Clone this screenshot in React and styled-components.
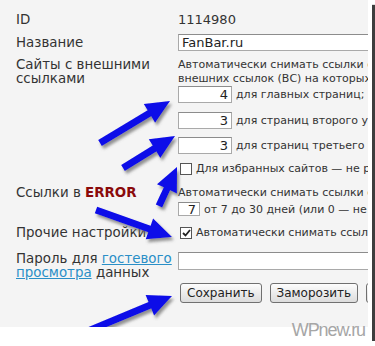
import React from 'react';
import styled, { createGlobalStyle } from 'styled-components';

const Global = createGlobalStyle`
  body {
    margin: 0;
    background: #fff;
    font-family: 'DejaVu Sans', Verdana, sans-serif;
  }
`;

const Frame = styled.div`
  position: relative;
  width: 372px;
  height: 341px;
  background: #fff;
  box-shadow: 3px 5px 1px rgba(40, 40, 40, 0.9);
`;

const Panel = styled.div`
  position: relative;
  width: 368px;
  height: 327px;
  background: #f4f4f4;
  overflow: hidden;
  color: #333;
`;

const Form = styled.div`
  display: flex;
  flex-direction: column;
  padding: 10px 0 0 16px;
`;

const Row = styled.div`
  display: grid;
  grid-template-columns: 162px 1fr;
  margin-top: ${p => p.$gap || 0}px;
  align-items: ${p => p.$align || 'start'};
`;

const Label = styled.div`
  font-size: 13.4px;
  line-height: ${p => p.$lh || 15}px;
`;

const Error = styled.b`
  color: #8a0a0a;
  font-weight: bold;
`;

const Link = styled.a`
  color: #2a8fc7;
  text-decoration: underline;
`;

const Value = styled.div`
  font-size: 13px;
  line-height: 16px;
  white-space: nowrap;
`;

const Content = styled.div`
  display: flex;
  flex-direction: column;
  white-space: nowrap;
`;

const Note = styled.div`
  font-size: 11px;
  line-height: 14px;
  white-space: nowrap;
`;

const Line = styled.div`
  display: flex;
  align-items: center;
  gap: 4px;
  font-size: 11px;
  white-space: nowrap;
  margin-top: ${p => p.$mt || 0}px;
`;

const Field = styled.input`
  box-sizing: border-box;
  width: ${p => p.$w}px;
  height: ${p => p.$h || 17}px;
  border: 1px solid #a9a9a9;
  border-top-color: #8c8c8c;
  background: #fff;
  font-family: 'DejaVu Sans', Verdana, sans-serif;
  font-size: 13px;
  color: #222;
  padding: 0 3px;
  text-align: ${p => p.$right ? 'right' : 'left'};
  margin: 0;
  outline: none;
  flex-shrink: 0;
`;

const Box = styled.span`
  box-sizing: border-box;
  width: 12px;
  height: 12px;
  margin-left: 2px;
  border: 1px solid #555;
  background: #fff;
  display: inline-flex;
  align-items: center;
  justify-content: center;
  flex-shrink: 0;
`;

const Buttons = styled.div`
  display: flex;
  gap: 8px;
  padding-left: 2px;
`;

const Button = styled.button`
  height: 20px;
  padding: 0 6px;
  border: 1px solid #707070;
  border-radius: 3px;
  background: linear-gradient(#fdfdfd, #ececec 50%, #dcdcdc);
  font-family: 'DejaVu Sans', Verdana, sans-serif;
  font-size: 12px;
  color: #222;
  white-space: nowrap;
  flex-shrink: 0;
`;

const Watermark = styled.div`
  position: absolute;
  right: 7px;
  top: 320px;
  font-family: 'Liberation Sans', Arial, sans-serif;
  font-size: 18px;
  line-height: 20px;
  letter-spacing: -1.1px;
  color: #a6a6a6;
`;

const Overlay = styled.svg`
  position: absolute;
  left: 0;
  top: 0;
  pointer-events: none;
`;

const arrows = [
  [100, 143, 170, 101],
  [123, 168, 175, 136],
  [159, 206, 177, 167],
  [96, 210, 172, 237],
  [88, 331, 172, 296],
];

function arrowPoints([x1, y1, x2, y2]) {
  const w = 7, hl = 24, hw = 22;
  const dx = x2 - x1, dy = y2 - y1;
  const L = Math.hypot(dx, dy);
  const ux = dx / L, uy = dy / L;
  const nx = -uy, ny = ux;
  const bx = x2 - ux * hl, by = y2 - uy * hl;
  const pts = [
    [x1 + nx * w / 2, y1 + ny * w / 2],
    [bx + nx * w / 2, by + ny * w / 2],
    [bx + nx * hw / 2, by + ny * hw / 2],
    [x2, y2],
    [bx - nx * hw / 2, by - ny * hw / 2],
    [bx - nx * w / 2, by - ny * w / 2],
    [x1 - nx * w / 2, y1 - ny * w / 2],
  ];
  return pts.map(p => p.map(v => v.toFixed(1)).join(',')).join(' ');
}

const Check = () => (
  <svg width="9" height="8" viewBox="0 0 9 8">
    <path d="M1 4 L3.5 6.5 L8 1" fill="none" stroke="#222" strokeWidth="1.8" />
  </svg>
);

const App = () => {
  return (
    <>
      <Global />
      <Frame>
        <Panel>
          <Form>
            <Row $gap={2}>
              <Label $lh={16}>ID</Label>
              <Value>1114980</Value>
            </Row>
            <Row $gap={6} $align="center">
              <Label>Название</Label>
              <Field $w={200} readOnly value="FanBar.ru" />
            </Row>
            <Row $gap={7}>
              <Label $lh={14}>Сайты с внешними<br />ссылками</Label>
              <Content>
                <Note>Автоматически снимать ссылки с сайтов, у которых количество<br />внешних ссылок (ВС) на которых больше:</Note>
                <Line $mt={0}><Field $w={54} $right readOnly value="4" />для главных страниц;</Line>
                <Line $mt={9}><Field $w={54} $right readOnly value="3" />для страниц второго уровня;</Line>
                <Line $mt={8}><Field $w={54} $right readOnly value="3" />для страниц третьего уровня.</Line>
                <Line $mt={8}><Box />Для избранных сайтов — не работает</Line>
              </Content>
            </Row>
            <Row $gap={11}>
              <Label $lh={14}>Ссылки в <Error>ERROR</Error></Label>
              <Content>
                <Note>Автоматически снимать ссылки с ошибкой через</Note>
                <Line $mt={2}><Field $w={22} $h={14} $right readOnly value="7" />от 7 до 30 дней (или 0 — не снимать)</Line>
              </Content>
            </Row>
            <Row $gap={9} $align="center">
              <Label>Прочие настройки</Label>
              <Line><Box><Check /></Box>Автоматически снимать ссылки с забаненных</Line>
            </Row>
            <Row $gap={12}>
              <Label $lh={14}>Пароль для <Link>гостевого</Link><br /><Link>просмотра</Link> данных</Label>
              <Field $w={200} $h={18} readOnly value="" />
            </Row>
            <Row $gap={3}>
              <span />
              <Buttons>
                <Button>Сохранить</Button>
                <Button>Заморозить</Button>
                <Button>Удалить</Button>
              </Buttons>
            </Row>
          </Form>
          <Overlay width="368" height="327">
            <defs>
              <filter id="sh" x="-20%" y="-20%" width="140%" height="140%">
                <feDropShadow dx="2" dy="3" stdDeviation="1.8" floodColor="#666" floodOpacity="0.7" />
              </filter>
            </defs>
            {arrows.map((a, i) => (
              <polygon key={i} points={arrowPoints(a)} fill="#0c0ce8" filter="url(#sh)" />
            ))}
          </Overlay>
        </Panel>
        <Watermark>WPnew.ru</Watermark>
      </Frame>
    </>
  );
};

export default App;
